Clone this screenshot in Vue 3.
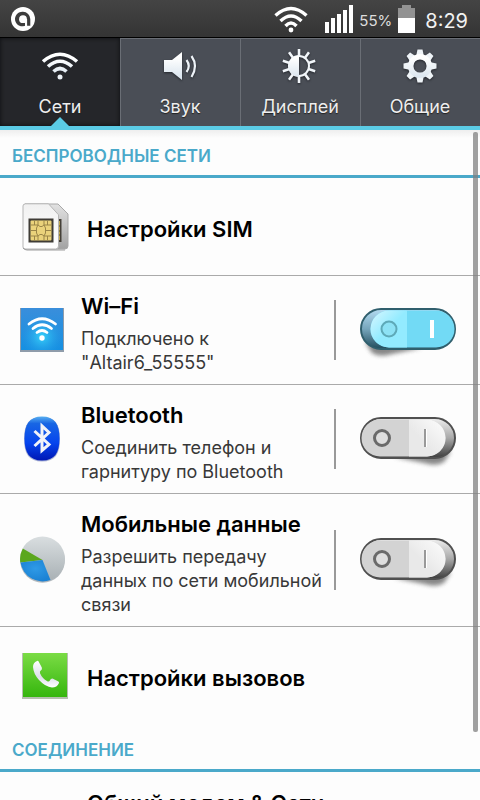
<script setup>
import { ref } from 'vue'

const tabs = [
  { id: 'net', label: 'Сети' },
  { id: 'sound', label: 'Звук' },
  { id: 'display', label: 'Дисплей' },
  { id: 'general', label: 'Общие' },
]
const active = ref('net')

const toggles = ref([
  { id: 'wifi', title: 'Wi–Fi', lines: 'Подключено к "Altair6_55555"', on: true },
  { id: 'bluetooth', title: 'Bluetooth', lines: 'Соединить телефон и гарнитуру по Bluetooth', on: false },
  { id: 'data', title: 'Мобильные данные', lines: 'Разрешить передачу данных по сети мобильной связи', on: false },
])

const rays = Array.from({ length: 10 }, (_, i) => i * 36)
const teeth = Array.from({ length: 8 }, (_, i) => i * 45)
</script>

<template>
  <div class="screen">
    <header class="status">
      <svg class="app-mark" width="24" height="24" viewBox="0 0 24 24" aria-hidden="true">
        <circle cx="12" cy="12" r="12" fill="#fff" />
        <path d="M12 4.800a7.300 7.300 0 0 1 7.300 7.200v6.800h-3.200V12h-1v6.300A7.300 7.300 0 1 1 12 4.800z" fill="#3d3d3d" />
        <circle cx="12" cy="12.200" r="3.900" fill="#fff" />
        <path d="M15 12v7" stroke="#fff" stroke-width="2" />
      </svg>
      <div class="indicators">
        <svg class="wifi-mark" width="34" height="28" viewBox="0 0 34 28" fill="none" stroke="#fff" stroke-width="3.400" aria-hidden="true">
          <path d="M1.500 10.500Q17 -3.500 32.500 10.500" />
          <path d="M6.500 16Q17 6 27.500 16" />
          <path d="M11.500 21Q17 15 22.500 21" />
          <circle cx="17" cy="25" r="2.400" fill="#fff" stroke="none" />
        </svg>
        <svg class="signal" width="28" height="28" viewBox="0 0 28 28" fill="#fff" aria-hidden="true">
          <path d="M0 17h4v11H0zM6 13h4v15H6zM12 9h4v19h-4zM18 5h4v23h-4zM24 0h4v28h-4z" />
        </svg>
        <span class="percent">55%</span>
        <svg class="battery" width="17" height="28" viewBox="0 0 17 28" aria-hidden="true">
          <path d="M4 0h9v3h4v10H0V3h4z" fill="#929292" />
          <path d="M0 13h17v15H0z" fill="#fff" />
        </svg>
        <span class="clock">8:29</span>
      </div>
    </header>

    <nav class="tabs">
      <button
        v-for="t in tabs"
        :key="t.id"
        type="button"
        class="tab"
        :class="{ selected: active === t.id }"
        @click="active = t.id"
      >
        <svg class="tab-icon" width="40" height="36" viewBox="0 0 40 36" aria-hidden="true">
          <defs>
            <linearGradient :id="'tone-' + t.id" x1="0" y1="0" x2="0" y2="36" gradientUnits="userSpaceOnUse">
              <stop offset="0.3" stop-color="#fff" />
              <stop offset="0.8" stop-color="#dde7f0" />
            </linearGradient>
          </defs>
          <g v-if="t.id === 'net'" fill="none" stroke="url(#tone-net)" stroke-width="3.600">
            <path d="M3 14.500Q20 0 37 14.500" />
            <path d="M8 19.500Q20 9 32 19.500" />
            <path d="M13.500 24.500Q20 18.500 26.500 24.500" />
            <circle cx="20" cy="30" r="2.500" fill="#eef3f8" stroke="none" />
          </g>
          <g v-else-if="t.id === 'sound'">
            <path d="M4 13h8L22 5v28L12 25H4z" fill="url(#tone-sound)" />
            <path d="M26.500 13Q31 19 26.500 25M31.500 9Q38.500 19 31.500 30" fill="none" stroke="#eef3f8" stroke-width="2.200" />
          </g>
          <g v-else-if="t.id === 'display'">
            <path
              v-for="r in rays"
              :key="r"
              d="M19 2v7"
              stroke="#f2f6fa"
              stroke-width="2.600"
              :transform="`rotate(${r} 19 19)`"
            />
            <circle cx="19" cy="19" r="10" fill="none" stroke="#f2f6fa" stroke-width="2" />
            <path d="M19 8.500a10.500 10.500 0 0 0 0 21z" fill="url(#tone-display)" />
          </g>
          <g v-else>
            <path
              v-for="r in teeth"
              :key="r"
              d="M17.500 2.500h5l1.500 7h-8z"
              fill="#eff4f8"
              :transform="`rotate(${r} 20 19)`"
            />
            <circle cx="20" cy="19" r="9.300" fill="none" stroke="url(#tone-general)" stroke-width="5.500" />
          </g>
        </svg>
        <span>{{ t.label }}</span>
      </button>
    </nav>

    <main class="content">
      <h2 class="section">БЕСПРОВОДНЫЕ СЕТИ</h2>
      <a class="row link lined" href="#sim">
        <svg class="icon" width="47" height="48" viewBox="0 0 47 48" aria-hidden="true">
          <defs>
            <linearGradient id="card-back" x1="0" y1="0" x2="0" y2="1">
              <stop offset="0" stop-color="#e2e2e2" /><stop offset="1" stop-color="#a2a2a2" />
            </linearGradient>
            <linearGradient id="card-front" x1="0" y1="0" x2="0" y2="1">
              <stop offset="0" stop-color="#f1f1f1" /><stop offset="1" stop-color="#fff" />
            </linearGradient>
          </defs>
          <path d="M3 1h33l10 10v32a3 3 0 0 1-3 3H3z" fill="url(#card-back)" stroke="#a9a9a9" />
          <path d="M34 16h5.500v23H34z" fill="#454038" />
          <path d="M34 18h4v19h-4z" fill="#c2a750" />
          <path d="M34 23h4M34 28h4M34 32h4" stroke="#5b5031" />
          <path d="M3 .8h23.500l10 11V43a3 3 0 0 1-3 3H3a2 2 0 0 1-2-2V3a2 2 0 0 1 2-2z" fill="url(#card-front)" stroke="#b5b5b5" />
          <path d="M1 45q2 2 4 2h38" fill="none" stroke="#9d9d9d" />
          <rect x="6.500" y="15.500" width="25" height="24" fill="#3f3c36" />
          <rect x="8.500" y="17.500" width="21" height="20" rx="1" fill="#ead27b" />
          <path d="M8.500 22H16M8.500 27.500H15M8.500 33H16M22 22h7.500M23 27.500h6.500M22 33h7.500M12.500 17.500V22M12.500 33v4.500M25.500 17.500V22M25.500 33v4.500M16 17.500V22l-1.500 3v5l1.500 3v4.500M22 17.500V22l1.500 3v5L22 33v4.500M16 22l2 1.500h2L22 22M16 33l2-1.500h2l2 1.500" fill="none" stroke="#9a8548" stroke-width="1" />
        </svg>
        <span class="title">Настройки SIM</span>
      </a>

      <div v-for="item in toggles" :key="item.id" class="row lined">
        <svg v-if="item.id === 'wifi'" class="icon" width="44" height="46" viewBox="0 0 44 46" aria-hidden="true">
          <defs>
            <linearGradient id="wifi-base" x1="0" y1="0" x2="0" y2="1">
              <stop offset="0" stop-color="#3a8edb" /><stop offset="1" stop-color="#1590e2" />
            </linearGradient>
            <radialGradient id="wifi-glow" cx="0.5" cy="0.68" r="0.5">
              <stop offset="0" stop-color="#35d3fb" /><stop offset="1" stop-color="#2499e6" stop-opacity="0" />
            </radialGradient>
          </defs>
          <rect y="1" width="44" height="44" fill="#8f9caa" />
          <rect x="1" y="1" width="42" height="42" fill="url(#wifi-base)" />
          <rect x="1" y="1" width="42" height="42" fill="url(#wifi-glow)" />
          <g fill="none" stroke="#fff" stroke-width="2.800" stroke-linecap="round">
            <path d="M9 17Q22 6.500 35.500 17" />
            <path d="M13 21.500Q22 14 31.500 21.500" />
            <path d="M17 25.500Q22 21.500 27 25.500" />
            <circle cx="22" cy="31" r="2.700" fill="#fff" stroke="none" />
          </g>
        </svg>
        <svg v-else-if="item.id === 'bluetooth'" class="icon" width="44" height="46" viewBox="0 0 44 46" aria-hidden="true">
          <defs>
            <linearGradient id="bt-base" x1="0" y1="0" x2="0" y2="1">
              <stop offset="0" stop-color="#58aff0" /><stop offset="0.16" stop-color="#1866e4" />
              <stop offset="0.6" stop-color="#0645ee" /><stop offset="1" stop-color="#0017b4" />
            </linearGradient>
          </defs>
          <path d="M22 1C35 1 40 8 40 23S35 45.500 22 45.500 4 38 4 23 9 1 22 1z" fill="#aab3d4" />
          <path d="M22 .5C34.500 .5 39.500 8 39.500 22.500S34.500 44.500 22 44.500 4.500 37 4.500 22.500 9.500 .5 22 .5z" fill="url(#bt-base)" />
          <path d="M14.500 15L29 28.500 22 34.500V10L29 16.500 14.500 30" fill="none" stroke="#f1f3f8" stroke-width="3" />
        </svg>
        <svg v-else class="icon" width="46" height="48" viewBox="0 0 46 48" aria-hidden="true">
          <defs>
            <linearGradient id="pie-grey" x1="0" y1="0" x2="0" y2="1">
              <stop offset="0" stop-color="#d9dee0" /><stop offset="1" stop-color="#a8b0b4" />
            </linearGradient>
            <radialGradient id="pie-blue" cx="0.5" cy="0.4" r="0.6">
              <stop offset="0" stop-color="#2f9ae6" /><stop offset="1" stop-color="#1b82d4" />
            </radialGradient>
          </defs>
          <circle cx="22.500" cy="24.500" r="22.300" fill="#b3b9bd" />
          <circle cx="22.500" cy="23" r="22.500" fill="url(#pie-grey)" />
          <path d="M22.500 24L2.800 12.500A22.500 22.500 0 0 0 .3 26.500z" fill="#5ba71d" />
          <path d="M22.500 24L.5 26.500A22.500 22.500 0 0 0 30.500 44z" fill="url(#pie-blue)" />
        </svg>

        <label class="texts" :for="item.id">
          <span class="title">{{ item.title }}</span>
          <span class="caption">{{ item.lines }}</span>
        </label>

        <div class="switch">
          <svg v-if="item.on" width="96" height="54" viewBox="0 0 96 54" aria-hidden="true">
            <defs>
              <filter id="blur-on" x="-20%" y="-50%" width="140%" height="200%"><feGaussianBlur stdDeviation="2" /></filter>
              <linearGradient id="edge-on" x1="0" y1="0" x2="0" y2="1">
                <stop offset="0" stop-color="#b5dcf2" /><stop offset="0.5" stop-color="#76a5bb" /><stop offset="1" stop-color="#204c5c" />
              </linearGradient>
              <linearGradient id="face-on" x1="0" y1="0" x2="1" y2="1">
                <stop offset="0" stop-color="#d9f7ff" /><stop offset="0.5" stop-color="#93ebff" />
              </linearGradient>
            </defs>
            <path d="M5 34L12 45Q20 50 32 46L62 40z" fill="#555" opacity="0.7" filter="url(#blur-on)" />
            <rect x="1" y="1" width="94" height="40" rx="20" fill="url(#edge-on)" stroke="#305f6d" stroke-width="2" />
            <path d="M29 2.500H76a18.500 18.500 0 0 1 0 37H29a18.500 18.500 0 0 1 0-37z" fill="#72daf5" />
            <path d="M29 2.500H47v37H29a18.500 18.500 0 0 1 0-37z" fill="url(#face-on)" />
            <circle cx="29" cy="21" r="7.500" fill="#8de2f5" stroke="#5ea9b8" stroke-width="2" />
            <rect x="70" y="12" width="4" height="18" fill="#fff" />
          </svg>
          <svg v-else width="96" height="54" viewBox="0 0 96 54" aria-hidden="true">
            <defs>
              <filter :id="'blur-' + item.id" x="-20%" y="-50%" width="140%" height="200%"><feGaussianBlur stdDeviation="2" /></filter>
              <linearGradient :id="'edge-' + item.id" x1="0" y1="0" x2="0" y2="1">
                <stop offset="0" stop-color="#f0f0f0" /><stop offset="0.5" stop-color="#a8a8a8" /><stop offset="1" stop-color="#3c3c3c" />
              </linearGradient>
              <linearGradient :id="'face-' + item.id" x1="1" y1="0" x2="0" y2="1">
                <stop offset="0" stop-color="#fdfdfd" /><stop offset="0.6" stop-color="#e9e9e9" />
              </linearGradient>
            </defs>
            <path d="M91 34L84 45Q76 50 64 46L34 40z" fill="#555" opacity="0.7" :filter="`url(#blur-${item.id})`" />
            <rect x="1" y="1" width="94" height="40" rx="20" :fill="`url(#edge-${item.id})`" stroke="#505050" stroke-width="2" />
            <path d="M20 2.500H67a18.500 18.500 0 0 1 0 37H20a18.500 18.500 0 0 1 0-37z" fill="#d3d3d3" />
            <path d="M49 2.500H67a18.500 18.500 0 0 1 0 37H49z" :fill="`url(#face-${item.id})`" />
            <circle cx="22" cy="21" r="7.500" fill="#dedede" stroke="#6a6a6a" stroke-width="3" />
            <rect x="64" y="12" width="2" height="18" fill="#999" />
            <rect x="66" y="12" width="1" height="18" fill="#fff" />
          </svg>
          <input :id="item.id" v-model="item.on" type="checkbox" role="switch" />
        </div>
      </div>

      <a class="row link" href="#calls">
        <svg class="icon" width="47" height="48" viewBox="0 0 47 48" aria-hidden="true">
          <defs>
            <linearGradient id="call-base" x1="0" y1="0" x2="0" y2="1">
              <stop offset="0" stop-color="#7bdc45" /><stop offset="1" stop-color="#35b60d" />
            </linearGradient>
            <linearGradient id="call-tone" x1="0" y1="0" x2="0" y2="1">
              <stop offset="0" stop-color="#fff" /><stop offset="0.6" stop-color="#dcdfea" /><stop offset="1" stop-color="#fff" />
            </linearGradient>
          </defs>
          <rect y="1" width="46" height="46" fill="#b5bfae" />
          <rect x="1" y="1" width="44" height="44" fill="url(#call-base)" />
          <path d="M15 9q-4 1.500-4 6 .5 7 6 13 6.500 7 13 7.500 5 0 7-4.500.4-1-1-1.800l-5.500-2.700q-2 0-2.600 2-1 1.500-2.600.7-5-2.700-7.300-8-.5-2 .8-2.600 1.800-.8 1-3L16.500 9.300q-.5-.8-1.500-.3z" fill="url(#call-tone)" />
        </svg>
        <span class="title">Настройки вызовов</span>
      </a>

      <h2 class="section">СОЕДИНЕНИЕ</h2>
      <a class="row link next" href="#tethering">
        <span class="icon blank"></span>
        <span class="title">Общий модем &amp; Сети</span>
      </a>
      <div class="scroll-thumb"></div>
    </main>
  </div>
</template>

<style>
body {
  background: #fdfdfd;
}
</style>

<style scoped>
.screen,
.screen * {
  box-sizing: border-box;
}
.screen {
  display: flex;
  flex-direction: column;
  height: 100vh;
  overflow: hidden;
  background: #fdfdfd;
  font-family: Inter, "Noto Sans", sans-serif;
  color: #000;
}
.status {
  display: flex;
  flex: none;
  align-items: center;
  justify-content: space-between;
  height: 38px;
  padding: 0 12px 0 11px;
  background: linear-gradient(#444, #343434);
  border-bottom: 1px solid #000;
  color: #f2f2f2;
}
.indicators {
  display: flex;
  align-items: center;
}
.signal {
  margin-left: 17px;
}
.percent {
  margin: 4px 6px 0 6px;
  font-size: 15px;
  line-height: 20px;
  color: #ddd;
}
.clock {
  margin: 4px 0 0 10px;
  font-size: 20px;
  line-height: 24px;
}
.tabs {
  display: grid;
  flex: none;
  grid-template-columns: repeat(4, 1fr);
  height: 92px;
  border-bottom: 4px solid #5bcbe5;
  background: #4a4e56;
}
.tab {
  position: relative;
  display: flex;
  flex-direction: column;
  align-items: center;
  gap: 12px;
  padding: 9px 0 0;
  border: 0;
  background: #4a4e56;
  box-shadow: inset 1px 1px 0 #6a6e75;
  color: #eee;
  font-family: inherit;
  font-size: 18px;
  line-height: 24px;
  text-shadow: 0 1px 1px #222;
}
.tab.selected {
  background: #25262a;
  box-shadow: inset 0 0 4px #0c0d0f;
}
.tab.selected::after {
  content: "";
  position: absolute;
  bottom: 0;
  left: 50%;
  margin-left: -9px;
  border: 9px solid transparent;
  border-top: 0;
  border-bottom-color: #5bcbe5;
}
.tab-icon {
  filter: drop-shadow(0 1px 1px #23262c);
}
.content {
  position: relative;
  flex: 1;
  min-height: 0;
  overflow: hidden;
  background: linear-gradient(#eee, #fdfdfd 8px);
}
.section {
  height: 48px;
  margin: 0;
  padding: 14px 12px 0;
  border-bottom: 3px solid #4aa9ca;
  color: #4aa9ca;
  font-size: 17px;
  font-weight: 600;
  line-height: 24px;
}
.row {
  display: flex;
  align-items: center;
  padding: 6px 24px 6px 20px;
}
.link {
  height: 97px;
  padding: 0 22px;
  gap: 18px;
  color: #000;
  text-decoration: none;
}
.lined {
  border-bottom: 1px solid #aaa;
}
.link.lined {
  height: 98px;
}
.icon {
  flex: none;
}
.blank {
  width: 47px;
}
.title {
  font-size: 22px;
  font-weight: 600;
  line-height: 34px;
}
.link .title {
  padding-top: 4px;
}
.texts {
  display: flex;
  flex: 1;
  flex-direction: column;
  gap: 4px;
  margin-left: auto;
  max-width: 253px;
  padding: 7px 0 3px;
}
.caption {
  max-width: 248px;
  color: #383838;
  font-size: 18px;
  line-height: 24px;
}
.switch {
  display: grid;
  flex: none;
  align-items: center;
  height: 60px;
  padding-left: 24px;
  border-left: 2px solid #999;
}
.switch > * {
  grid-area: 1 / 1;
}
.switch svg {
  margin-top: 8px;
}
.switch input {
  width: 96px;
  height: 42px;
  margin: 0;
  opacity: 0;
}
.link.next {
  align-items: flex-start;
  padding-top: 10px;
}
.scroll-thumb {
  position: absolute;
  top: 2px;
  right: 2px;
  width: 5px;
  height: 600px;
  border-radius: 2px;
  background: #808080;
  opacity: 0.75;
}
</style>
